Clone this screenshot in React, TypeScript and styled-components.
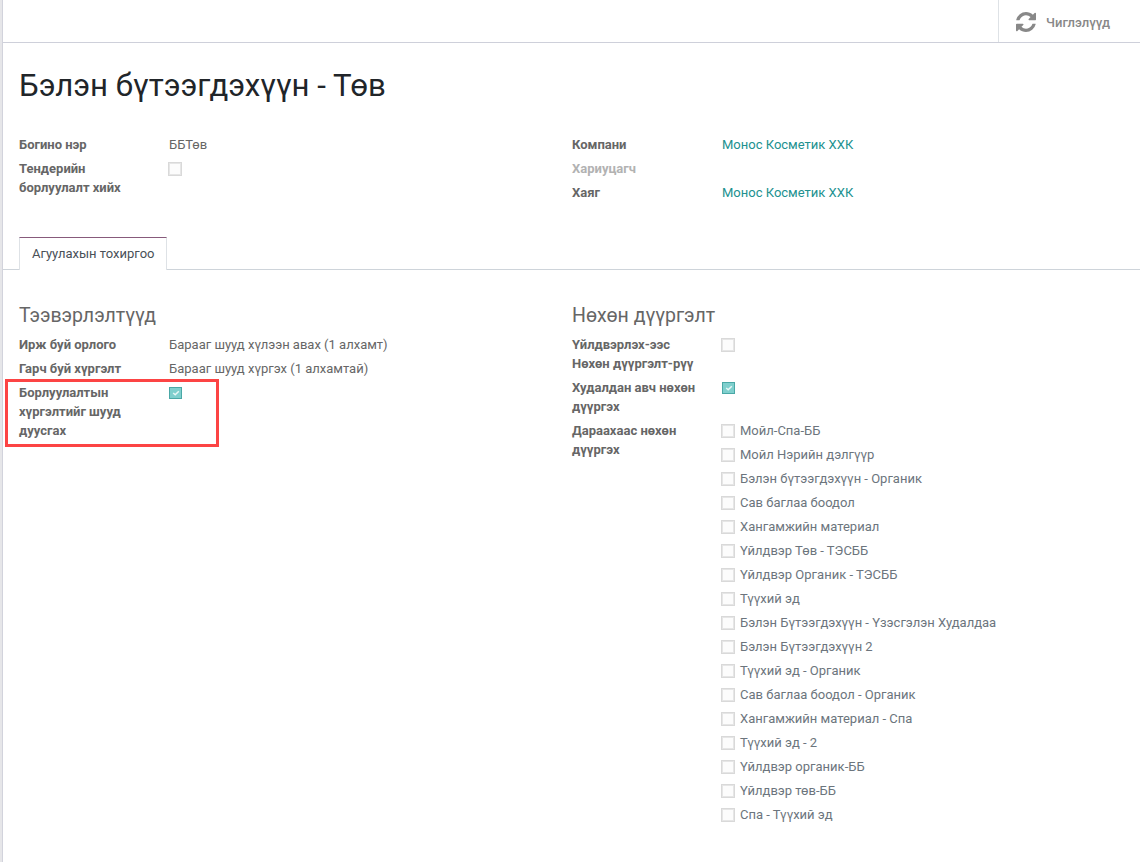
import React from "react";
import styled, { createGlobalStyle } from "styled-components";

const GlobalStyle = createGlobalStyle`
  *, *::before, *::after { box-sizing: border-box; }
  body {
    margin: 0;
    background: #e6e6e9;
    color: #666;
    font: 400 13px/19px Roboto, "Noto Sans", sans-serif;
  }
`;

const Sheet = styled.main`
  height: 862px;
  margin-left: 2px;
  overflow: hidden;
  border-left: 1px solid #d2d3dc;
  background: #fff;
`;

const ButtonBar = styled.div`
  display: flex;
  justify-content: flex-end;
  height: 43px;
  border-bottom: 1px solid #ced0da;
`;

const StatButton = styled.button`
  display: flex;
  align-items: center;
  gap: 10px;
  width: 142px;
  padding: 2px 0 0 17px;
  border: 0;
  border-left: 1px solid #dee2e6;
  background: none;
  color: #888;
  font: 500 13px/19px Roboto, "Noto Sans", sans-serif;
`;

const Title = styled.h1`
  margin: 24px 0 30px 16px;
  color: #212529;
  font-size: 31.2px;
  font-weight: 400;
  line-height: 38px;
`;

const Columns = styled.div<{ $height?: number }>`
  display: grid;
  grid-template-columns: 553px 1fr;
  padding-left: 16px;
  height: ${(p) => (p.$height ? `${p.$height}px` : "auto")};
`;

const Field = styled.div`
  display: grid;
  grid-template-columns: 150px 1fr;
  margin-bottom: 5px;
`;

const Label = styled.div<{ $muted?: boolean }>`
  width: 130px;
  color: ${(p) => (p.$muted ? "#b2b2b2" : "#666")};
  font-weight: 700;
  white-space: pre-line;
`;

const Link = styled.a`
  color: #21918f;
`;

const Box = styled.span<{ $checked?: boolean }>`
  display: flex;
  flex: none;
  align-items: center;
  justify-content: center;
  width: ${(p) => (p.$checked ? 13 : 14)}px;
  height: ${(p) => (p.$checked ? 12 : 14)}px;
  margin: ${(p) => (p.$checked ? "4px 0 0 0" : "3px 0 0 -1px")};
  border: 1px solid ${(p) => (p.$checked ? "#4aa8a6" : "#d9d9d9")};
  background: ${(p) => (p.$checked ? "#7fcfcd" : "#fcfcfc")};
  box-shadow: ${(p) => (p.$checked ? "none" : "inset 0 0 0 1px #e6e6e6")};
`;

const Tabs = styled.div`
  display: flex;
  height: 33px;
  padding-left: 16px;
  border-bottom: 1px solid #ced4da;
`;

const Tab = styled.div`
  height: 33px;
  width: 148px;
  padding: 6px 0 0 12px;
  border: 1px solid #dee2e6;
  border-top-color: #875a7b;
  border-bottom: 0;
  background: #fff;
  color: #495057;
  white-space: nowrap;
`;

const SectionTitle = styled.h2`
  margin: 0 0 7px;
  color: #666;
  font-size: 19.5px;
  font-weight: 400;
  line-height: 24px;
`;

const TabContent = styled.section`
  padding-top: 34px;
`;

const Highlight = styled.div`
  position: relative;

  &::after {
    content: "";
    position: absolute;
    left: -14px;
    top: -4px;
    width: 214px;
    height: 68px;
    border: 3px solid #fc4444;
  }
`;

const Option = styled.div`
  display: flex;
  gap: 5px;
  height: 24px;
  color: #6c757d;
`;

const warehouses = [
  "Мойл-Спа-ББ",
  "Мойл Нэрийн дэлгүүр",
  "Бэлэн бүтээгдэхүүн - Органик",
  "Сав баглаа боодол",
  "Хангамжийн материал",
  "Үйлдвэр Төв - ТЭСББ",
  "Үйлдвэр Органик - ТЭСББ",
  "Түүхий эд",
  "Бэлэн Бүтээгдэхүүн - Үзэсгэлэн Худалдаа",
  "Бэлэн Бүтээгдэхүүн 2",
  "Түүхий эд - Органик",
  "Сав баглаа боодол - Органик",
  "Хангамжийн материал - Спа",
  "Түүхий эд - 2",
  "Үйлдвэр органик-ББ",
  "Үйлдвэр төв-ББ",
  "Спа - Түүхий эд",
];

const RefreshIcon = () => (
  <svg width="20" height="20" viewBox="0 128 1536 1536" fill="#888">
    <path d="M1511 1056q0 5-1 7-64 268-268 434.5t-478 166.5q-146 0-282.5-55t-243.5-157l-129 129q-19 19-45 19t-45-19-19-45v-448q0-26 19-45t45-19h448q26 0 45 19t19 45-19 45l-137 137q71 66 161 102t187 36q134 0 250-65t186-179q11-17 53-117 8-23 30-23h192q13 0 22.5 9.5t9.5 22.5zm25-800v448q0 26-19 45t-45 19h-448q-26 0-45-19t-19-45 19-45l138-138q-148-137-349-137-134 0-250 65t-186 179q-11 17-53 117-8 23-30 23h-199q-13 0-22.5-9.5t-9.5-22.5v-7q65-268 270-434.5t480-166.5q146 0 284 55.5t245 156.5l130-129q19-19 45-19t45 19 19 45z" />
  </svg>
);

const Checkbox = ({ checked }: { checked?: boolean }) => (
  <Box $checked={checked}>
    {checked && (
      <svg width="8" height="8" viewBox="0 0 8 8" fill="none" stroke="#e8f7f6" strokeWidth="1.5">
        <path d="M1.2 4 L3.2 5.8 L6.8 2.2" />
      </svg>
    )}
  </Box>
);

const Row = ({
  label,
  muted,
  children,
}: {
  label: string;
  muted?: boolean;
  children?: React.ReactNode;
}) => (
  <Field>
    <Label $muted={muted}>{label}</Label>
    <div>{children}</div>
  </Field>
);

export default function App() {
  return (
    <>
      <GlobalStyle />
      <Sheet>
        <ButtonBar>
          <StatButton>
            <RefreshIcon />
            Чиглэлүүд
          </StatButton>
        </ButtonBar>
        <Title>Бэлэн бүтээгдэхүүн - Төв</Title>
        <Columns $height={102}>
          <div>
            <Row label="Богино нэр">ББТөв</Row>
            <Row label={"Тендерийн\nборлуулалт хийх"}>
              <Checkbox />
            </Row>
          </div>
          <div>
            <Row label="Компани">
              <Link>Монос Косметик ХХК</Link>
            </Row>
            <Row label="Хариуцагч" muted />
            <Row label="Хаяг">
              <Link>Монос Косметик ХХК</Link>
            </Row>
          </div>
        </Columns>
        <Tabs>
          <Tab>Агуулахын тохиргоо</Tab>
        </Tabs>
        <TabContent>
          <Columns>
            <div>
              <SectionTitle>Тээвэрлэлтүүд</SectionTitle>
              <Row label="Ирж буй орлого">Барааг шууд хүлээн авах (1 алхамт)</Row>
              <Row label="Гарч буй хүргэлт">Барааг шууд хүргэх (1 алхамтай)</Row>
              <Highlight>
                <Row label={"Борлуулалтын\nхүргэлтийг шууд\nдуусгах"}>
                  <Checkbox checked />
                </Row>
              </Highlight>
            </div>
            <div>
              <SectionTitle>Нөхөн дүүргэлт</SectionTitle>
              <Row label={"Үйлдвэрлэх-ээс\nНөхөн дүүргэлт-рүү"}>
                <Checkbox />
              </Row>
              <Row label={"Худалдан авч нөхөн\nдүүргэх"}>
                <Checkbox checked />
              </Row>
              <Row label={"Дараахаас нөхөн\nдүүргэх"}>
                {warehouses.map((name) => (
                  <Option key={name}>
                    <Checkbox />
                    {name}
                  </Option>
                ))}
              </Row>
            </div>
          </Columns>
        </TabContent>
      </Sheet>
    </>
  );
}
